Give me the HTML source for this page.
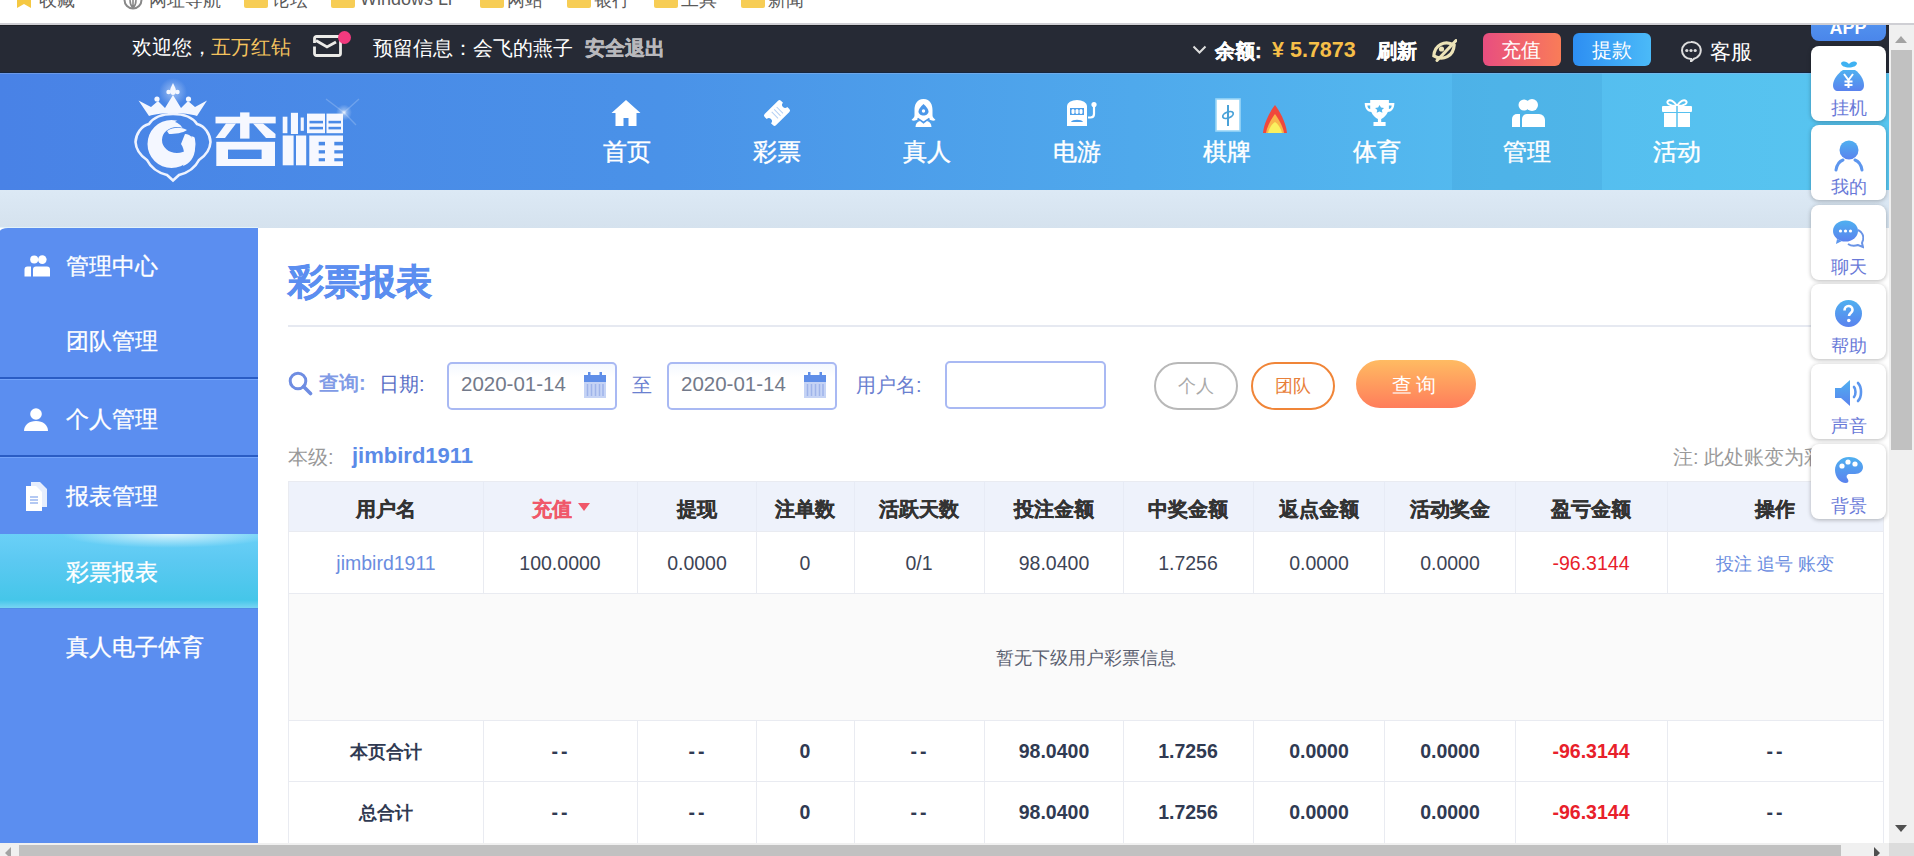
<!DOCTYPE html>
<html><head><meta charset="utf-8">
<style>
*{box-sizing:border-box;margin:0;padding:0}
html,body{width:1914px;height:856px;overflow:hidden;background:#fff}
body{position:relative;font-family:"Liberation Sans",sans-serif;color:#333}
.a{position:absolute;white-space:nowrap}
</style></head><body>
<div class="a" style="left:0px;top:25px;width:1889px;height:48px;background:#262a35;"></div>
<div class="a" style="left:132px;top:37px;font-size:20px;line-height:20px;color:#fff;">欢迎您，</div>
<div class="a" style="left:211px;top:37px;font-size:20px;line-height:20px;color:#f4c35e;">五万红钻</div>
<svg class="a" style="left:313px;top:35px" width="29" height="22" viewBox="0 0 29 22"><path d="M1.5 8V3.5a2 2 0 0 1 2-2H25.5a2 2 0 0 1 2 2V18.5a2 2 0 0 1-2 2H3.5a2 2 0 0 1-2-2V11.5" fill="none" stroke="#ecebe8" stroke-width="2.8"/><path d="M3 5.5L14 12 23 7" fill="none" stroke="#ecebe8" stroke-width="2.8"/></svg>
<div class="a" style="left:338px;top:31px;width:13px;height:13px;background:#f23a7e;border-radius:50%"></div>
<div class="a" style="left:373px;top:38px;font-size:20px;line-height:20px;color:#fff;">预留信息：会飞的燕子</div>
<div class="a" style="left:585px;top:38px;font-size:20px;line-height:20px;color:#b8b8bc;font-weight:bold;-webkit-text-stroke:0.5px #b8b8bc">安全退出</div>
<svg class="a" style="left:1192px;top:45px" width="15" height="10" viewBox="0 0 15 10"><path d="M1.5 1.5l6 6 6-6" fill="none" stroke="#ddd" stroke-width="2"/></svg>
<div class="a" style="left:1215px;top:41px;font-size:20px;line-height:20px;color:#fff;font-weight:bold;-webkit-text-stroke:0.3px #fff">余额:</div>
<div class="a" style="left:1272px;top:40px;font-size:21.5px;line-height:21.5px;color:#f6bf48;font-weight:bold;">¥<span style="margin-left:6px">5.7873</span></div>
<div class="a" style="left:1377px;top:41px;font-size:20px;line-height:20px;color:#fff;font-weight:bold;-webkit-text-stroke:0.3px #fff">刷新</div>
<svg class="a" style="left:1431px;top:39px" width="26" height="23" viewBox="0 0 26 23"><g transform="rotate(-28 13 11.5)"><path d="M1.5 11.5C4.5 6.5 8.5 4.5 13 4.5S21.5 6.5 24.5 11.5C21.5 16.5 17.5 18.5 13 18.5S4.5 16.5 1.5 11.5z" fill="none" stroke="#ece3b8" stroke-width="3.2"/></g><circle cx="10.5" cy="10" r="2.6" fill="#ece3b8"/><path d="M6 21.5L25 1.5" stroke="#ece3b8" stroke-width="3" stroke-linecap="round"/></svg>
<div class="a" style="left:1483px;top:33px;width:78px;height:33px;background:linear-gradient(90deg,#e84e80,#f97c58);border-radius:6px"></div>
<div class="a" style="left:1501px;top:40px;font-size:20px;line-height:20px;color:#fff;">充值</div>
<div class="a" style="left:1573px;top:33px;width:78px;height:33px;background:linear-gradient(90deg,#2d8ef2,#4bbaf8);border-radius:6px"></div>
<div class="a" style="left:1592px;top:40px;font-size:20px;line-height:20px;color:#fff;">提款</div>
<svg class="a" style="left:1680px;top:40px" width="22" height="22" viewBox="0 0 22 22"><path d="M11 2a9 8.5 0 1 0 0 17l0 2.5l3-2.8A9 8.5 0 0 0 11 2z" fill="none" stroke="#ddd" stroke-width="2"/><circle cx="6.8" cy="10.5" r="1.6" fill="#ddd"/><circle cx="11" cy="10.5" r="1.6" fill="#ddd"/><circle cx="15.2" cy="10.5" r="1.6" fill="#ddd"/></svg>
<div class="a" style="left:1710px;top:41px;font-size:21px;line-height:21px;color:#fff;">客服</div>
<div class="a" style="left:0px;top:73px;width:1889px;height:117px;background:linear-gradient(90deg,#4982e6 0%,#4a92e8 35%,#4fa9ec 60%,#54bcef 80%,#58c6f0 100%);"></div>
<div class="a" style="left:1452px;top:73px;width:150px;height:117px;background:rgba(30,110,180,0.10);"></div>
<div class="a" style="left:0px;top:72px;width:1889px;height:1px;background:#15263e;"></div>
<div class="a" style="left:0px;top:73px;width:1889px;height:1px;background:rgba(150,180,230,0.45);"></div>
<div class="a" style="left:0px;top:25px;width:1889px;height:1px;background:#1e2026;"></div>
<svg class="a" style="left:611px;top:99px" width="30" height="28" viewBox="0 0 30 28"><path d="M15 1L0.5 14h4v13h8v-8h5v8h8V14h4z" fill="#fff"/></svg>
<div class="a" style="left:327px;width:600px;text-align:center;top:140px;font-size:24px;line-height:24px;color:#fff;-webkit-text-stroke:0.4px #fff">首页</div>
<svg class="a" style="left:762px;top:99px" width="30" height="28" viewBox="0 0 30 28"><g transform="translate(15 14) rotate(-45)"><path d="M-9.5 -8h19a2 2 0 0 1 2 2v3a3 3 0 0 0 0 6v3a2 2 0 0 1-2 2h-19a2 2 0 0 1-2-2v-3a3 3 0 0 0 0-6v-3a2 2 0 0 1 2-2z" fill="#fff"/><path d="M-3 -4.5v9M0.5 -4.5v9M4 -4.5v9" stroke="#b5d0f4" stroke-width="1"/></g></svg>
<div class="a" style="left:477px;width:600px;text-align:center;top:140px;font-size:24px;line-height:24px;color:#fff;-webkit-text-stroke:0.4px #fff">彩票</div>
<svg class="a" style="left:911px;top:99px" width="30" height="28" viewBox="0 0 30 28"><path d="M12.5 0C5.5 0 3.5 6 3.5 11V16.5C3.5 18.5 1.5 19.8 0.5 21C2.5 22.2 5 21.5 6.5 20.5L12.5 24 18.5 20.5C20 21.5 22.5 22.2 24.5 21 23.5 19.8 21.5 18.5 21.5 16.5V11C21.5 6 19.5 0 12.5 0Z" fill="#fff"/><path d="M12.5 5C9.5 8 7.5 10 7.5 12.5 7.5 15 10 16.5 12.5 16.5S17.5 15 17.5 12.5C17.5 10 15.5 8 12.5 5Z" fill="#4b97e9"/><circle cx="12.5" cy="12" r="1.7" fill="#fff"/><path d="M6.5 19.5L12.5 23.5 18.5 19.5" fill="none" stroke="#4b97e9" stroke-width="1.8"/><path d="M4.5 28C4.5 24.5 6.5 22.5 9 22L12.5 24.8 16 22C18.5 22.5 20.5 24.5 20.5 28Z" fill="#fff"/></svg>
<div class="a" style="left:627px;width:600px;text-align:center;top:140px;font-size:24px;line-height:24px;color:#fff;-webkit-text-stroke:0.4px #fff">真人</div>
<svg class="a" style="left:1063px;top:99px" width="35" height="28" viewBox="0 0 35 28"><path d="M4 7a10 6 0 0 1 20 0v20H4z" fill="#fff"/><rect x="7" y="9" width="14" height="7" fill="#4e9fea"/><rect x="8.5" y="10" width="3" height="5" rx="1.5" fill="#fff"/><rect x="12.5" y="10" width="3" height="5" rx="1.5" fill="#fff"/><rect x="16.5" y="10" width="3" height="5" rx="1.5" fill="#fff"/><path d="M8 23c1-3 11-3 12 0z" fill="#4e9fea"/><path d="M25 18.5h2.5c2 0 3.5-1.5 3.5-3.5V7" fill="none" stroke="#fff" stroke-width="2.2"/><circle cx="31" cy="5.5" r="2.6" fill="#fff"/></svg>
<div class="a" style="left:777px;width:600px;text-align:center;top:140px;font-size:24px;line-height:24px;color:#fff;-webkit-text-stroke:0.4px #fff">电游</div>
<svg class="a" style="left:1215px;top:98px" width="26" height="34" viewBox="0 0 26 34"><rect x="1" y="1" width="24" height="32" fill="#fff" stroke="#9ad6f7" stroke-width="1.6"/><path d="M13 7v21" stroke="#4aa2d8" stroke-width="2"/><ellipse cx="13" cy="17" rx="5.5" ry="3" transform="rotate(-22 13 17)" fill="none" stroke="#4aa2d8" stroke-width="1.8"/></svg>
<div class="a" style="left:927px;width:600px;text-align:center;top:140px;font-size:24px;line-height:24px;color:#fff;-webkit-text-stroke:0.4px #fff">棋牌</div>
<svg class="a" style="left:1363px;top:99px" width="34" height="28" viewBox="0 0 34 28"><g transform="translate(-0.5 0) scale(1.1 1)"><path d="M7 1h17v3h5c0 6-3 9-6 9-1 3-4 6-6 7v3h4v4H10v-4h4v-3c-2-1-5-4-6-7-3 0-6-3-6-9h5z" fill="#fff"/><path d="M4.5 6.5h2.5v3.5c-1.5 0-2.5-1.5-2.5-3.5zM26.5 6.5h-2.5v3.5c1.5 0 2.5-1.5 2.5-3.5z" fill="#52b6ee"/><path d="M15.5 6l1.3 2.6 2.8.4-2 2 .5 2.8-2.6-1.4-2.6 1.4.5-2.8-2-2 2.8-.4z" fill="#52b6ee"/></g></svg>
<div class="a" style="left:1077px;width:600px;text-align:center;top:140px;font-size:24px;line-height:24px;color:#fff;-webkit-text-stroke:0.4px #fff">体育</div>
<svg class="a" style="left:1512px;top:99px" width="34" height="28" viewBox="0 0 34 28"><circle cx="12" cy="6" r="5.5" fill="#fff"/><circle cx="20" cy="6" r="6" fill="#fff"/><path d="M0 28v-8a5 5 0 0 1 5-5h3v13z" fill="#fff"/><path d="M10 28v-8a5 5 0 0 1 5-5h12a6 6 0 0 1 6 6v7z" fill="#fff"/></svg>
<div class="a" style="left:1227px;width:600px;text-align:center;top:140px;font-size:24px;line-height:24px;color:#fff;-webkit-text-stroke:0.4px #fff">管理</div>
<svg class="a" style="left:1662px;top:99px" width="30" height="28" viewBox="0 0 30 28"><path d="M15 7c-3-5-7-7-9-5s1 5 9 5c8 0 11-3 9-5s-6 0-9 5" fill="none" stroke="#fff" stroke-width="2"/><rect x="0" y="7" width="30" height="6" rx="1" fill="#fff"/><rect x="2" y="14" width="26" height="14" fill="#fff"/><path d="M15 7v21" stroke="#57c0ee" stroke-width="1.5"/></svg>
<div class="a" style="left:1377px;width:600px;text-align:center;top:140px;font-size:24px;line-height:24px;color:#fff;-webkit-text-stroke:0.4px #fff">活动</div>
<svg class="a" style="left:1262px;top:104px" width="26" height="30" viewBox="0 0 26 30"><path d="M13 1C9 6 2 18 1 29h24C24 18 17 6 13 1z" fill="#f0483c"/><path d="M13 10C10 14 5 22 4 29h18c-1-7-6-15-9-19z" fill="#f9b54a"/><path d="M6 29c1-5 4-9 7-11 3 2 6 6 7 11z" fill="#faf060"/></svg>
<svg class="a" style="left:125px;top:78px" width="92" height="110" viewBox="0 0 92 110">
<defs><radialGradient id="glow" cx="0.5" cy="0.5" r="0.5"><stop offset="0" stop-color="#fff" stop-opacity="0.45"/><stop offset="1" stop-color="#fff" stop-opacity="0"/></radialGradient></defs>
<circle cx="48" cy="14" r="14" fill="url(#glow)"/>
<path d="M13.5 22.5L24 38C36 34 60 34 72 38L82 22.5 70 29 63 23 56 30 48 17 40 30 33 23 26 29z" fill="#f4f7ff"/>
<path d="M48 5C46 9 45 11 45 13.5 45 15.5 46.5 17 48 17S51 15.5 51 13.5C51 11 50 9 48 5z" fill="#f4f7ff"/>
<circle cx="43.5" cy="14" r="2.2" fill="#f4f7ff"/><circle cx="52.5" cy="14" r="2.2" fill="#f4f7ff"/>
<circle cx="32" cy="21" r="2.6" fill="#f4f7ff"/><circle cx="63.5" cy="21" r="2.6" fill="#f4f7ff"/>
<path d="M48 36C60 36 68 40 72 46 80 48 85 56 85.5 64 85 72 80 78 74 82 70 90 62 95 54 97L48 102.5 42 97C34 95 26 90 22 82 16 78 11 72 10.5 64 11 56 16 48 24 46 28 40 36 36 48 36Z" fill="none" stroke="#eef3ff" stroke-width="2.6"/>
<path fill-rule="evenodd" fill="#f4f7ff" d="M22.5 66a24 24 0 1 0 48 0a24 24 0 1 0 -48 0ZM37 62a15 13 0 1 0 30 0a15 13 0 1 0 -30 0Z"/>
<path d="M56 40C66 44 72 52 72 60L60 56C58 50 56 46 50 44z" fill="#4a86e6"/>
<path d="M42 53C48 49 56 49 62 52 58 55 50 56 44 56z" fill="#f4f7ff"/>
<path d="M60 56C66 56 70 62 70 70 70 80 64 86 58 88 60 80 60 72 56 66z" fill="#f4f7ff"/>
</svg>
<svg class="a" style="left:210px;top:105px" width="140" height="67" viewBox="0 0 140 67">
<defs><mask id="lm"><rect width="140" height="67" fill="#fff"/>
<rect x="18" y="44.6" width="33.6" height="9.4" fill="#000"/>
<rect x="99.5" y="15.8" width="13.5" height="2.6" fill="#000"/><rect x="99.5" y="21.8" width="13.5" height="2.6" fill="#000"/>
<rect x="118.5" y="15.8" width="12.5" height="2.6" fill="#000"/><rect x="118.5" y="21.8" width="12.5" height="2.6" fill="#000"/>
<rect x="108.7" y="36.8" width="6.3" height="3.6" fill="#000"/><rect x="108.7" y="45.2" width="6.3" height="3.3" fill="#000"/><rect x="108.7" y="53.2" width="6.3" height="3.1" fill="#000"/>
<rect x="124.3" y="36.8" width="9" height="3.6" fill="#000"/><rect x="124.3" y="45.2" width="9" height="3.3" fill="#000"/><rect x="124.3" y="53.2" width="9" height="3.1" fill="#000"/>
</mask></defs>
<g fill="#f6f8ff" mask="url(#lm)">
<rect x="5.5" y="11.7" width="60.2" height="6.7"/>
<rect x="30.1" y="7.4" width="9.4" height="26.2"/>
<path d="M16 18.4H26L15 33H5.5z"/>
<path d="M43 18.4H53L65.5 29V33H56z"/>
<rect x="6.3" y="36.8" width="58.7" height="24.2"/>
<rect x="72.7" y="11.7" width="4.7" height="16.5"/>
<rect x="80.9" y="7.8" width="7.1" height="21.2"/>
<rect x="90.7" y="12.5" width="3.1" height="13.3"/>
<rect x="97" y="8.6" width="18" height="19.6"/>
<rect x="116.5" y="8.6" width="16.5" height="19.6"/>
<rect x="72.7" y="30.5" width="10.9" height="29.8"/>
<rect x="86" y="30.5" width="10.2" height="29.8"/>
<rect x="99.3" y="30.5" width="33.7" height="30.5"/>
</g>
</svg>
<svg class="a" style="left:318px;top:86px" width="50" height="50" viewBox="0 0 50 50"><defs><radialGradient id="sp" cx="0.5" cy="0.5" r="0.5"><stop offset="0" stop-color="#fff" stop-opacity="0.9"/><stop offset="0.35" stop-color="#fff" stop-opacity="0.35"/><stop offset="1" stop-color="#fff" stop-opacity="0"/></radialGradient></defs><circle cx="26" cy="26.5" r="8" fill="url(#sp)"/><path d="M26 26.5L8 13M26 26.5L41 13M26 26.5L38 39" stroke="#fff" stroke-opacity="0.2" stroke-width="1.4"/></svg>
<div class="a" style="left:0px;top:190px;width:1889px;height:38px;background:linear-gradient(#dce9f5,#d5e2ee);"></div>
<div class="a" style="left:0px;top:227px;width:258px;height:1px;background:#e2f3fa;"></div>
<div class="a" style="left:0px;top:228px;width:258px;height:615px;background:#5b8ef0;border-top-left-radius:8px 3px"></div>
<svg class="a" style="left:24px;top:255px" width="28" height="22" viewBox="0 0 28 22"><circle cx="10.2" cy="4.6" r="4" fill="#fff"/><circle cx="18.3" cy="4.6" r="4.3" fill="#fff"/><path d="M0.5 21.5v-7a3 3 0 0 1 3-3h3.5v10z" fill="#fff"/><path d="M9 21.5v-7a3 3 0 0 1 3-3h11a3 3 0 0 1 3 3v7z" fill="#fff"/></svg>
<div class="a" style="left:66px;top:255px;font-size:23px;line-height:23px;color:#fff;-webkit-text-stroke:0.3px #fff">管理中心</div>
<div class="a" style="left:66px;top:330px;font-size:23px;line-height:23px;color:#fff;-webkit-text-stroke:0.3px #fff">团队管理</div>
<div class="a" style="left:0px;top:377px;width:258px;height:2px;background:#2a5cc4;"></div>
<div class="a" style="left:0px;top:379px;width:258px;height:1px;background:#73a3fa;"></div>
<svg class="a" style="left:24px;top:408px" width="24" height="23" viewBox="0 0 24 23"><circle cx="12" cy="6" r="5.8" fill="#fff"/><path d="M0 23c0-6 5-10 12-10s12 4 12 10z" fill="#fff"/></svg>
<div class="a" style="left:66px;top:408px;font-size:23px;line-height:23px;color:#fff;-webkit-text-stroke:0.3px #fff">个人管理</div>
<div class="a" style="left:0px;top:455px;width:258px;height:2px;background:#2a5cc4;"></div>
<div class="a" style="left:0px;top:457px;width:258px;height:1px;background:#73a3fa;"></div>
<svg class="a" style="left:25px;top:482px" width="23" height="29" viewBox="0 0 23 29"><path d="M6 0h9l7 7v18H6z" fill="#fff" opacity="0.85"/><path d="M1 4h10l6 6v19H1z" fill="#fff"/><path d="M5 15h8M5 18h8M5 21h8" stroke="#9cb8f0" stroke-width="1.5"/></svg>
<div class="a" style="left:66px;top:485px;font-size:23px;line-height:23px;color:#fff;-webkit-text-stroke:0.3px #fff">报表管理</div>
<div class="a" style="left:0px;top:534px;width:258px;height:75px;background:linear-gradient(#6ad0f7 0%,#5cc9f2 35%,#45c6e9 88%,#7ed6f4 100%);"></div>
<div class="a" style="left:0px;top:608px;width:258px;height:1px;background:#4f8ce6;"></div>
<div class="a" style="left:60px;top:534px;width:198px;height:14px;background:radial-gradient(ellipse at 55% 0%,rgba(255,255,255,0.75),rgba(255,255,255,0) 70%);"></div>
<div class="a" style="left:66px;top:561px;font-size:23px;line-height:23px;color:#fff;-webkit-text-stroke:0.3px #fff">彩票报表</div>
<div class="a" style="left:66px;top:636px;font-size:23px;line-height:23px;color:#fff;-webkit-text-stroke:0.3px #fff">真人电子体育</div>
<div class="a" style="left:288px;top:264px;font-size:36px;line-height:36px;color:#5b8ef0;font-weight:bold;-webkit-text-stroke:0.6px #5b8ef0">彩票报表</div>
<div class="a" style="left:288px;top:325px;width:1595px;height:2px;background:#e6e9f1;"></div>
<svg class="a" style="left:288px;top:371px" width="25" height="25" viewBox="0 0 25 25"><circle cx="10" cy="10" r="7.8" fill="none" stroke="#6f8de2" stroke-width="3"/><path d="M15.5 15.5l7 7" stroke="#6f8de2" stroke-width="3.6" stroke-linecap="round"/></svg>
<div class="a" style="left:319px;top:373px;font-size:20px;line-height:20px;color:#819be6;font-weight:bold;">查询:</div>
<div class="a" style="left:379px;top:374px;font-size:20px;line-height:20px;color:#5a6fc6;">日期:</div>
<div class="a" style="left:447px;top:362px;width:170px;height:48px;background:linear-gradient(#f4f8ff,#fff 30%);border:2px solid #a9b9f3;border-radius:5px"></div>
<div class="a" style="left:461px;top:374px;font-size:20.5px;line-height:20.5px;color:#737a8a;">2020-01-14</div>
<svg class="a" style="left:584px;top:372px" width="22" height="26" viewBox="0 0 22 26"><rect x="0" y="3" width="22" height="23" fill="#c5d3f5"/><rect x="0" y="3" width="22" height="7" fill="#5f8ee8"/><rect x="4" y="0" width="2.5" height="6" fill="#5f8ee8"/><rect x="15.5" y="0" width="2.5" height="6" fill="#5f8ee8"/><path d="M3.5 12v12M7.5 12v12M11.5 12v12M15.5 12v12M19 12v12" stroke="#9fb4ea" stroke-width="1.5"/></svg>
<div class="a" style="left:667px;top:362px;width:170px;height:48px;background:linear-gradient(#f4f8ff,#fff 30%);border:2px solid #a9b9f3;border-radius:5px"></div>
<div class="a" style="left:681px;top:374px;font-size:20.5px;line-height:20.5px;color:#737a8a;">2020-01-14</div>
<svg class="a" style="left:804px;top:372px" width="22" height="26" viewBox="0 0 22 26"><rect x="0" y="3" width="22" height="23" fill="#c5d3f5"/><rect x="0" y="3" width="22" height="7" fill="#5f8ee8"/><rect x="4" y="0" width="2.5" height="6" fill="#5f8ee8"/><rect x="15.5" y="0" width="2.5" height="6" fill="#5f8ee8"/><path d="M3.5 12v12M7.5 12v12M11.5 12v12M15.5 12v12M19 12v12" stroke="#9fb4ea" stroke-width="1.5"/></svg>
<div class="a" style="left:632px;top:375px;font-size:20px;line-height:20px;color:#6a80d0;">至</div>
<div class="a" style="left:856px;top:375px;font-size:20px;line-height:20px;color:#6a80d0;">用户名:</div>
<div class="a" style="left:945px;top:361px;width:161px;height:48px;background:#fff;border:2px solid #a9b9f3;border-radius:5px"></div>
<div class="a" style="left:1154px;top:362px;width:84px;height:48px;background:#fff;border:2px solid #b8b8b8;border-radius:24px"></div>
<div class="a" style="left:896px;width:600px;text-align:center;top:377px;font-size:18px;line-height:18px;color:#aaa;">个人</div>
<div class="a" style="left:1251px;top:362px;width:84px;height:48px;background:#fff;border:2px solid #f08538;border-radius:24px"></div>
<div class="a" style="left:993px;width:600px;text-align:center;top:377px;font-size:18px;line-height:18px;color:#e8803a;">团队</div>
<div class="a" style="left:1356px;top:360px;width:120px;height:48px;background:linear-gradient(#ffbb62,#ff7d5b);border-radius:24px"></div>
<div class="a" style="left:1114px;width:600px;text-align:center;top:375px;font-size:20px;line-height:20px;color:#fff;letter-spacing:4px;padding-left:4px">查询</div>
<div class="a" style="left:288px;top:447px;font-size:20px;line-height:20px;color:#999;">本级:</div>
<div class="a" style="left:352px;top:445px;font-size:22px;line-height:22px;color:#5b8be8;font-weight:bold;">jimbird1911</div>
<div class="a" style="left:1673px;top:447px;font-size:20px;line-height:20px;color:#9a9a9a;">注: 此处账变为彩票账变</div>
<div class="a" style="left:288px;top:481px;width:1596px;height:51px;background:#eef2fb;"></div>
<div class="a" style="left:288px;top:532px;width:1596px;height:61px;background:#fff;"></div>
<div class="a" style="left:288px;top:593px;width:1596px;height:127px;background:#fafafa;"></div>
<div class="a" style="left:288px;top:481px;width:1596px;height:1px;background:#e9ebf1;"></div>
<div class="a" style="left:288px;top:531px;width:1596px;height:1px;background:#e9ebf1;"></div>
<div class="a" style="left:288px;top:593px;width:1596px;height:1px;background:#e9ebf1;"></div>
<div class="a" style="left:288px;top:720px;width:1596px;height:1px;background:#e9ebf1;"></div>
<div class="a" style="left:288px;top:781px;width:1596px;height:1px;background:#e9ebf1;"></div>
<div class="a" style="left:288px;top:481px;width:1px;height:362px;background:#e9ebf1;"></div>
<div class="a" style="left:1883px;top:481px;width:1px;height:362px;background:#e9ebf1;"></div>
<div class="a" style="left:483px;top:481px;width:1px;height:50px;background:#e7ebf5;"></div>
<div class="a" style="left:483px;top:531px;width:1px;height:62px;background:#e9ebf1;"></div>
<div class="a" style="left:483px;top:720px;width:1px;height:123px;background:#e9ebf1;"></div>
<div class="a" style="left:637px;top:481px;width:1px;height:50px;background:#e7ebf5;"></div>
<div class="a" style="left:637px;top:531px;width:1px;height:62px;background:#e9ebf1;"></div>
<div class="a" style="left:637px;top:720px;width:1px;height:123px;background:#e9ebf1;"></div>
<div class="a" style="left:756px;top:481px;width:1px;height:50px;background:#e7ebf5;"></div>
<div class="a" style="left:756px;top:531px;width:1px;height:62px;background:#e9ebf1;"></div>
<div class="a" style="left:756px;top:720px;width:1px;height:123px;background:#e9ebf1;"></div>
<div class="a" style="left:854px;top:481px;width:1px;height:50px;background:#e7ebf5;"></div>
<div class="a" style="left:854px;top:531px;width:1px;height:62px;background:#e9ebf1;"></div>
<div class="a" style="left:854px;top:720px;width:1px;height:123px;background:#e9ebf1;"></div>
<div class="a" style="left:984px;top:481px;width:1px;height:50px;background:#e7ebf5;"></div>
<div class="a" style="left:984px;top:531px;width:1px;height:62px;background:#e9ebf1;"></div>
<div class="a" style="left:984px;top:720px;width:1px;height:123px;background:#e9ebf1;"></div>
<div class="a" style="left:1123px;top:481px;width:1px;height:50px;background:#e7ebf5;"></div>
<div class="a" style="left:1123px;top:531px;width:1px;height:62px;background:#e9ebf1;"></div>
<div class="a" style="left:1123px;top:720px;width:1px;height:123px;background:#e9ebf1;"></div>
<div class="a" style="left:1253px;top:481px;width:1px;height:50px;background:#e7ebf5;"></div>
<div class="a" style="left:1253px;top:531px;width:1px;height:62px;background:#e9ebf1;"></div>
<div class="a" style="left:1253px;top:720px;width:1px;height:123px;background:#e9ebf1;"></div>
<div class="a" style="left:1384px;top:481px;width:1px;height:50px;background:#e7ebf5;"></div>
<div class="a" style="left:1384px;top:531px;width:1px;height:62px;background:#e9ebf1;"></div>
<div class="a" style="left:1384px;top:720px;width:1px;height:123px;background:#e9ebf1;"></div>
<div class="a" style="left:1515px;top:481px;width:1px;height:50px;background:#e7ebf5;"></div>
<div class="a" style="left:1515px;top:531px;width:1px;height:62px;background:#e9ebf1;"></div>
<div class="a" style="left:1515px;top:720px;width:1px;height:123px;background:#e9ebf1;"></div>
<div class="a" style="left:1667px;top:481px;width:1px;height:50px;background:#e7ebf5;"></div>
<div class="a" style="left:1667px;top:531px;width:1px;height:62px;background:#e9ebf1;"></div>
<div class="a" style="left:1667px;top:720px;width:1px;height:123px;background:#e9ebf1;"></div>
<div class="a" style="left:86px;width:600px;text-align:center;top:499px;font-size:20px;line-height:20px;color:#333;font-weight:bold;-webkit-text-stroke:0.3px #333">用户名</div>
<div class="a" style="left:252px;width:600px;text-align:center;top:499px;font-size:20px;line-height:20px;color:#f0586a;font-weight:bold;-webkit-text-stroke:0.3px #f0586a">充值</div>
<svg class="a" style="left:577px;top:502px" width="14" height="10" viewBox="0 0 14 10"><path d="M1 1h12L7 9z" fill="#f0586a"/></svg>
<div class="a" style="left:397px;width:600px;text-align:center;top:499px;font-size:20px;line-height:20px;color:#333;font-weight:bold;-webkit-text-stroke:0.3px #333">提现</div>
<div class="a" style="left:505px;width:600px;text-align:center;top:499px;font-size:20px;line-height:20px;color:#333;font-weight:bold;-webkit-text-stroke:0.3px #333">注单数</div>
<div class="a" style="left:619px;width:600px;text-align:center;top:499px;font-size:20px;line-height:20px;color:#333;font-weight:bold;-webkit-text-stroke:0.3px #333">活跃天数</div>
<div class="a" style="left:754px;width:600px;text-align:center;top:499px;font-size:20px;line-height:20px;color:#333;font-weight:bold;-webkit-text-stroke:0.3px #333">投注金额</div>
<div class="a" style="left:888px;width:600px;text-align:center;top:499px;font-size:20px;line-height:20px;color:#333;font-weight:bold;-webkit-text-stroke:0.3px #333">中奖金额</div>
<div class="a" style="left:1019px;width:600px;text-align:center;top:499px;font-size:20px;line-height:20px;color:#333;font-weight:bold;-webkit-text-stroke:0.3px #333">返点金额</div>
<div class="a" style="left:1150px;width:600px;text-align:center;top:499px;font-size:20px;line-height:20px;color:#333;font-weight:bold;-webkit-text-stroke:0.3px #333">活动奖金</div>
<div class="a" style="left:1291px;width:600px;text-align:center;top:499px;font-size:20px;line-height:20px;color:#333;font-weight:bold;-webkit-text-stroke:0.3px #333">盈亏金额</div>
<div class="a" style="left:1475px;width:600px;text-align:center;top:499px;font-size:20px;line-height:20px;color:#333;font-weight:bold;-webkit-text-stroke:0.3px #333">操作</div>
<div class="a" style="left:86px;width:600px;text-align:center;top:554px;font-size:19.5px;line-height:19.5px;color:#6b8de0;">jimbird1911</div>
<div class="a" style="left:260px;width:600px;text-align:center;top:554px;font-size:19.5px;line-height:19.5px;color:#3d4455;">100.0000</div>
<div class="a" style="left:397px;width:600px;text-align:center;top:554px;font-size:19.5px;line-height:19.5px;color:#3d4455;">0.0000</div>
<div class="a" style="left:505px;width:600px;text-align:center;top:554px;font-size:19.5px;line-height:19.5px;color:#3d4455;">0</div>
<div class="a" style="left:619px;width:600px;text-align:center;top:554px;font-size:19.5px;line-height:19.5px;color:#3d4455;">0/1</div>
<div class="a" style="left:754px;width:600px;text-align:center;top:554px;font-size:19.5px;line-height:19.5px;color:#3d4455;">98.0400</div>
<div class="a" style="left:888px;width:600px;text-align:center;top:554px;font-size:19.5px;line-height:19.5px;color:#3d4455;">1.7256</div>
<div class="a" style="left:1019px;width:600px;text-align:center;top:554px;font-size:19.5px;line-height:19.5px;color:#3d4455;">0.0000</div>
<div class="a" style="left:1150px;width:600px;text-align:center;top:554px;font-size:19.5px;line-height:19.5px;color:#3d4455;">0.0000</div>
<div class="a" style="left:1291px;width:600px;text-align:center;top:554px;font-size:19.5px;line-height:19.5px;color:#e8202a;">-96.3144</div>
<div class="a" style="left:1475px;width:600px;text-align:center;top:555px;font-size:18px;line-height:18px;color:#6b8de0;">投注 追号 账变</div>
<div class="a" style="left:786px;width:600px;text-align:center;top:649px;font-size:18px;line-height:18px;color:#5a6070;">暂无下级用户彩票信息</div>
<div class="a" style="left:86px;width:600px;text-align:center;top:743px;font-size:18px;line-height:18px;color:#303a52;font-weight:bold;">本页合计</div>
<div class="a" style="left:261px;width:600px;text-align:center;top:742px;font-size:19.5px;line-height:19.5px;color:#303a52;font-weight:bold;letter-spacing:3px">--</div>
<div class="a" style="left:398px;width:600px;text-align:center;top:742px;font-size:19.5px;line-height:19.5px;color:#303a52;font-weight:bold;letter-spacing:3px">--</div>
<div class="a" style="left:505px;width:600px;text-align:center;top:742px;font-size:19.5px;line-height:19.5px;color:#303a52;font-weight:bold;">0</div>
<div class="a" style="left:620px;width:600px;text-align:center;top:742px;font-size:19.5px;line-height:19.5px;color:#303a52;font-weight:bold;letter-spacing:3px">--</div>
<div class="a" style="left:754px;width:600px;text-align:center;top:742px;font-size:19.5px;line-height:19.5px;color:#303a52;font-weight:bold;">98.0400</div>
<div class="a" style="left:888px;width:600px;text-align:center;top:742px;font-size:19.5px;line-height:19.5px;color:#303a52;font-weight:bold;">1.7256</div>
<div class="a" style="left:1019px;width:600px;text-align:center;top:742px;font-size:19.5px;line-height:19.5px;color:#303a52;font-weight:bold;">0.0000</div>
<div class="a" style="left:1150px;width:600px;text-align:center;top:742px;font-size:19.5px;line-height:19.5px;color:#303a52;font-weight:bold;">0.0000</div>
<div class="a" style="left:1291px;width:600px;text-align:center;top:742px;font-size:19.5px;line-height:19.5px;color:#e8202a;font-weight:bold;">-96.3144</div>
<div class="a" style="left:1476px;width:600px;text-align:center;top:742px;font-size:19.5px;line-height:19.5px;color:#303a52;font-weight:bold;letter-spacing:3px">--</div>
<div class="a" style="left:86px;width:600px;text-align:center;top:804px;font-size:18px;line-height:18px;color:#303a52;font-weight:bold;">总合计</div>
<div class="a" style="left:261px;width:600px;text-align:center;top:803px;font-size:19.5px;line-height:19.5px;color:#303a52;font-weight:bold;letter-spacing:3px">--</div>
<div class="a" style="left:398px;width:600px;text-align:center;top:803px;font-size:19.5px;line-height:19.5px;color:#303a52;font-weight:bold;letter-spacing:3px">--</div>
<div class="a" style="left:505px;width:600px;text-align:center;top:803px;font-size:19.5px;line-height:19.5px;color:#303a52;font-weight:bold;">0</div>
<div class="a" style="left:620px;width:600px;text-align:center;top:803px;font-size:19.5px;line-height:19.5px;color:#303a52;font-weight:bold;letter-spacing:3px">--</div>
<div class="a" style="left:754px;width:600px;text-align:center;top:803px;font-size:19.5px;line-height:19.5px;color:#303a52;font-weight:bold;">98.0400</div>
<div class="a" style="left:888px;width:600px;text-align:center;top:803px;font-size:19.5px;line-height:19.5px;color:#303a52;font-weight:bold;">1.7256</div>
<div class="a" style="left:1019px;width:600px;text-align:center;top:803px;font-size:19.5px;line-height:19.5px;color:#303a52;font-weight:bold;">0.0000</div>
<div class="a" style="left:1150px;width:600px;text-align:center;top:803px;font-size:19.5px;line-height:19.5px;color:#303a52;font-weight:bold;">0.0000</div>
<div class="a" style="left:1291px;width:600px;text-align:center;top:803px;font-size:19.5px;line-height:19.5px;color:#e8202a;font-weight:bold;">-96.3144</div>
<div class="a" style="left:1476px;width:600px;text-align:center;top:803px;font-size:19.5px;line-height:19.5px;color:#303a52;font-weight:bold;letter-spacing:3px">--</div>
<div class="a" style="left:1811px;top:0px;width:75px;height:41px;background:linear-gradient(#5da0f4,#4a86ea);border-radius:0 0 8px 8px"></div>
<div class="a" style="left:1548px;width:600px;text-align:center;top:19px;font-size:18px;line-height:18px;color:#fff;font-weight:bold;">APP</div>
<div class="a" style="left:1811px;top:46px;width:75px;height:75px;background:#fff;border-radius:8px;box-shadow:0 1px 4px rgba(0,0,0,0.28)"></div>
<svg class="a" style="left:1833px;top:60px" width="32" height="32" viewBox="0 0 32 32"><defs><linearGradient id="wg" x1="0" y1="0" x2="0" y2="1"><stop offset="0" stop-color="#4fb0f0"/><stop offset="1" stop-color="#5a82ee"/></linearGradient></defs><path d="M8 3C10 0.5 14 1.5 16 4 18 1.5 22 0.5 24 3 24 6 20 7.5 16 7.5 12 7.5 8 6 8 3Z" fill="#3fb2f2"/><path d="M10 10H22C27 13 31 20 31 25 31 29 29 31 26 31H5C2 31 0 29 0 25 0 20 5 13 10 10Z" fill="url(#wg)"/><path d="M11 14l4.5 6 4.5-6M15.5 20v8M11.5 21.5h8M11.5 25h8" fill="none" stroke="#fff" stroke-width="2"/></svg>
<div class="a" style="left:1549px;width:600px;text-align:center;top:99px;font-size:18px;line-height:18px;color:#6a7ad8;">挂机</div>
<div class="a" style="left:1811px;top:125px;width:75px;height:75px;background:#fff;border-radius:8px;box-shadow:0 1px 4px rgba(0,0,0,0.28)"></div>
<svg class="a" style="left:1834px;top:140px" width="30" height="32" viewBox="0 0 30 32"><defs><linearGradient id="wg" x1="0" y1="0" x2="0" y2="1"><stop offset="0" stop-color="#4fb0f0"/><stop offset="1" stop-color="#5a82ee"/></linearGradient></defs><circle cx="15" cy="10" r="9.5" fill="url(#wg)"/><path d="M2 30c1-6 4-9 7-10M28 30c-1-6-4-9-7-10" fill="none" stroke="#5d96ee" stroke-width="3" stroke-linecap="round"/></svg>
<div class="a" style="left:1549px;width:600px;text-align:center;top:178px;font-size:18px;line-height:18px;color:#6a7ad8;">我的</div>
<div class="a" style="left:1811px;top:205px;width:75px;height:75px;background:#fff;border-radius:8px;box-shadow:0 1px 4px rgba(0,0,0,0.28)"></div>
<svg class="a" style="left:1833px;top:220px" width="31" height="29" viewBox="0 0 31 29"><defs><linearGradient id="wg" x1="0" y1="0" x2="0" y2="1"><stop offset="0" stop-color="#4fb0f0"/><stop offset="1" stop-color="#5a82ee"/></linearGradient></defs><ellipse cx="12.5" cy="11" rx="12.5" ry="10.5" fill="url(#wg)"/><path d="M4 19l-1 5 6-3z" fill="#5d98ee"/><path d="M25 10c4 2 6 6 5 10l-1 3 1 4-5-2c-3 1-7 1-10-1" fill="none" stroke="#6a94e6" stroke-width="2"/><circle cx="7.5" cy="11" r="1.6" fill="#fff"/><circle cx="12.5" cy="11" r="1.6" fill="#fff"/><circle cx="17.5" cy="11" r="1.6" fill="#fff"/></svg>
<div class="a" style="left:1549px;width:600px;text-align:center;top:258px;font-size:18px;line-height:18px;color:#6a7ad8;">聊天</div>
<div class="a" style="left:1811px;top:284px;width:75px;height:75px;background:#fff;border-radius:8px;box-shadow:0 1px 4px rgba(0,0,0,0.28)"></div>
<svg class="a" style="left:1835px;top:300px" width="27" height="27" viewBox="0 0 27 27"><defs><linearGradient id="wg" x1="0" y1="0" x2="0" y2="1"><stop offset="0" stop-color="#4fb0f0"/><stop offset="1" stop-color="#5a82ee"/></linearGradient></defs><circle cx="13.5" cy="13.5" r="13.5" fill="url(#wg)"/><path d="M9.5 10.5c0-3 2-4.5 4-4.5s4 1.5 4 4c0 3-3.5 3-3.5 6" fill="none" stroke="#fff" stroke-width="2.6"/><circle cx="13.8" cy="20.5" r="1.8" fill="#fff"/></svg>
<div class="a" style="left:1549px;width:600px;text-align:center;top:337px;font-size:18px;line-height:18px;color:#6a7ad8;">帮助</div>
<div class="a" style="left:1811px;top:364px;width:75px;height:75px;background:#fff;border-radius:8px;box-shadow:0 1px 4px rgba(0,0,0,0.28)"></div>
<svg class="a" style="left:1834px;top:378px" width="29" height="28" viewBox="0 0 29 28"><defs><linearGradient id="wg" x1="0" y1="0" x2="0" y2="1"><stop offset="0" stop-color="#4fb0f0"/><stop offset="1" stop-color="#5a82ee"/></linearGradient></defs><path d="M1 10h6l9-8v26l-9-8H1z" fill="url(#wg)"/><path d="M20 9c2 2 2 8 0 10M24 5c4 4 4 14 0 18" fill="none" stroke="#5c96ee" stroke-width="2.6" stroke-linecap="round"/></svg>
<div class="a" style="left:1549px;width:600px;text-align:center;top:417px;font-size:18px;line-height:18px;color:#6a7ad8;">声音</div>
<div class="a" style="left:1811px;top:444px;width:75px;height:75px;background:#fff;border-radius:8px;box-shadow:0 1px 4px rgba(0,0,0,0.28)"></div>
<svg class="a" style="left:1834px;top:456px" width="30" height="28" viewBox="0 0 30 28"><defs><linearGradient id="wg" x1="0" y1="0" x2="0" y2="1"><stop offset="0" stop-color="#4fb0f0"/><stop offset="1" stop-color="#5a82ee"/></linearGradient></defs><path d="M15 1C7 1 1 7 1 14c0 7 5 13 11 13 3 0 3-3 1-5-1-2 0-4 3-4h5c5 0 8-3 8-7C29 6 23 1 15 1z" fill="url(#wg)"/><circle cx="8" cy="10" r="2.6" fill="#fff"/><circle cx="14" cy="6" r="2.6" fill="#fff"/><circle cx="21" cy="8" r="2.6" fill="#fff"/></svg>
<div class="a" style="left:1549px;width:600px;text-align:center;top:497px;font-size:18px;line-height:18px;color:#6a7ad8;">背景</div>
<div class="a" style="left:1889px;top:25px;width:25px;height:818px;background:#f0f0f0;"></div>
<div class="a" style="left:1891px;top:50px;width:21px;height:400px;background:#c1c1c1;"></div>
<svg class="a" style="left:1893px;top:34px" width="16" height="10" viewBox="0 0 16 10"><path d="M2 9L8 2l6 7z" fill="#a3a3a3"/></svg>
<svg class="a" style="left:1893px;top:824px" width="16" height="10" viewBox="0 0 16 10"><path d="M2 1l6 7 6-7z" fill="#505050"/></svg>
<div class="a" style="left:0px;top:843px;width:1889px;height:13px;background:#f0f0f0;"></div>
<div class="a" style="left:19px;top:845px;width:1822px;height:11px;background:#c1c1c1;"></div>
<div class="a" style="left:1889px;top:843px;width:25px;height:13px;background:#dcdcdc;"></div>
<svg class="a" style="left:1872px;top:846px" width="10" height="10" viewBox="0 0 10 10"><path d="M2 1l6 6-6 6z" fill="#505050"/></svg>
<svg class="a" style="left:3px;top:846px" width="10" height="10" viewBox="0 0 10 10"><path d="M8 1L2 7l6 6z" fill="#a3a3a3"/></svg>
<div class="a" style="left:0px;top:0px;width:1914px;height:23px;background:#fff;"></div>
<div class="a" style="left:0px;top:23px;width:1914px;height:2px;background:#cfcfd4;"></div>
<svg class="a" style="left:16px;top:-7px" width="16" height="16" viewBox="0 0 16 16"><path d="M1 0h14v15l-7-4-7 4z" fill="#f5c842"/></svg>
<div class="a" style="left:39px;top:-9px;font-size:18px;line-height:18px;color:#5a5a5a;">收藏</div>
<svg class="a" style="left:123px;top:-10px" width="20" height="20" viewBox="0 0 20 20"><circle cx="10" cy="10" r="8.5" fill="none" stroke="#888" stroke-width="2"/><path d="M10 2v16M10 2c-4 4-4 12 0 16M10 2c4 4 4 12 0 16" fill="none" stroke="#888" stroke-width="1.6"/></svg>
<div class="a" style="left:149px;top:-9px;font-size:18px;line-height:18px;color:#5a5a5a;">网址导航</div>
<div class="a" style="left:244px;top:-4px;width:24px;height:12px;background:#f7cd55;border-radius:2px"></div>
<div class="a" style="left:272px;top:-9px;font-size:18px;line-height:18px;color:#5a5a5a;">论坛</div>
<div class="a" style="left:331px;top:-4px;width:24px;height:12px;background:#f7cd55;border-radius:2px"></div>
<div class="a" style="left:360px;top:-10px;font-size:18px;line-height:18px;color:#5a5a5a;">Windows Li</div>
<div class="a" style="left:480px;top:-4px;width:24px;height:12px;background:#f7cd55;border-radius:2px"></div>
<div class="a" style="left:507px;top:-9px;font-size:18px;line-height:18px;color:#5a5a5a;">网站</div>
<div class="a" style="left:567px;top:-4px;width:24px;height:12px;background:#f7cd55;border-radius:2px"></div>
<div class="a" style="left:594px;top:-9px;font-size:18px;line-height:18px;color:#5a5a5a;">银行</div>
<div class="a" style="left:654px;top:-4px;width:24px;height:12px;background:#f7cd55;border-radius:2px"></div>
<div class="a" style="left:681px;top:-9px;font-size:18px;line-height:18px;color:#5a5a5a;">工具</div>
<div class="a" style="left:741px;top:-4px;width:24px;height:12px;background:#f7cd55;border-radius:2px"></div>
<div class="a" style="left:768px;top:-9px;font-size:18px;line-height:18px;color:#5a5a5a;">新闻</div>
</body></html>
